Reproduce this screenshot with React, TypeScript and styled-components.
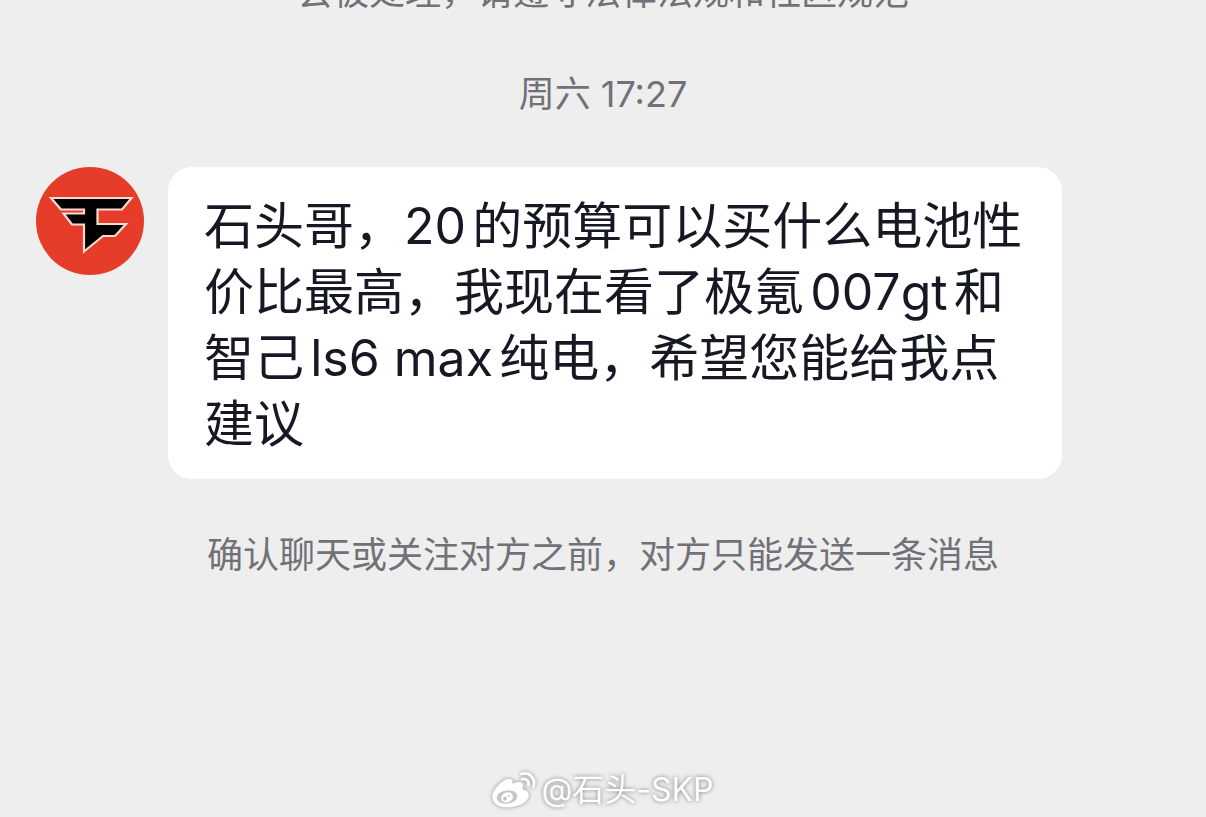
import React from 'react';
import styled, { createGlobalStyle } from 'styled-components';

const GlobalStyle = createGlobalStyle`
  * { box-sizing: border-box; }
  body {
    margin: 0;
    background: #eeeeee;
    font-family: Inter, "Noto Sans CJK SC", sans-serif;
    text-autospace: normal;
  }
`;

const Page = styled.main`
  min-height: 100vh;
  display: flex;
  flex-direction: column;
  background: #eeeeee;
`;

const SystemText = styled.p`
  margin: 0;
  text-align: center;
  font-size: 36px;
  line-height: 48px;
  color: #717178;
`;

const ClippedNotice = styled.header`
  height: 16px;
  overflow: hidden;
  display: flex;
  align-items: flex-end;
  justify-content: center;
`;

const Timestamp = styled(SystemText).attrs({ as: 'time' })`
  display: block;
  margin-top: 54px;
`;

const MessageRow = styled.article`
  display: flex;
  align-items: flex-start;
  gap: 24px;
  margin-top: 49px;
  padding: 0 144px 0 36px;
`;

const Avatar = styled.svg`
  flex: none;
  width: 108px;
  height: 108px;
`;

const Bubble = styled.p`
  flex: 1;
  margin: 0;
  padding: 26px 36px 22px;
  border-radius: 24px;
  background: #ffffff;
  color: #161823;
  font-size: 50px;
  line-height: 66px;
`;

const Hint = styled(SystemText)`
  margin-top: 52px;
`;

const Watermark = styled.footer`
  display: flex;
  align-items: center;
  justify-content: center;
  gap: 5px;
  margin-top: auto;
  padding-bottom: 6px;
  color: #ffffff;
  font-size: 32px;
  line-height: 42px;
  text-shadow: 0 0 4px rgba(0, 0, 0, 0.5);
`;

const WeiboLogo = styled.svg`
  width: 44px;
  height: 38px;
  overflow: visible;
  filter: drop-shadow(0 0 2px rgba(0, 0, 0, 0.4));
`;

export default function App() {
  return (
    <Page>
      <GlobalStyle />
      <ClippedNotice>
        <SystemText>会被处理，请遵守法律法规和社区规范</SystemText>
      </ClippedNotice>
      <Timestamp>周六 17:27</Timestamp>
      <MessageRow>
        <Avatar viewBox="0 0 108 108" role="img" aria-label="头像">
          <circle cx="54" cy="54" r="54" fill="#e63d2a" />
          <path
            d="M15 31H95.5L86 42.5H61.5V57H90L79 69H67L48 84.5V57.5H36L27.5 46.5H48V42.5H25Z"
            fill="#000000"
            stroke="#f8dcd4"
            strokeWidth="2.2"
          />
        </Avatar>
        <Bubble>
          石头哥，20的预算可以买什么电池性价比最高，我现在看了极氪007gt和智己ls6 max纯电，希望您能给我点建议
        </Bubble>
      </MessageRow>
      <Hint>确认聊天或关注对方之前，对方只能发送一条消息</Hint>
      <Watermark>
        <WeiboLogo viewBox="17 19 132 112" aria-hidden="true">
          <path
            d="M18 95C18 75 48 42 68 41C78 41 80 48 78 56C92 50 107 49 110 57C112 63 108 68 108 72C123 76 131 85 126 98C118 118 88 127 62 127C36 127 18 115 18 95Z"
            fill="#ffffff"
          />
          <ellipse cx="62" cy="96" rx="31" ry="20" transform="rotate(-8 62 96)" fill="#c6c6c6" />
          <ellipse cx="62" cy="97" rx="18" ry="15" transform="rotate(-20 62 97)" fill="#ffffff" />
          <circle cx="56" cy="101" r="5.5" fill="#c0c0c0" />
          <circle cx="67" cy="94" r="3" fill="#c0c0c0" />
          <g fill="none" stroke="#ffffff" strokeWidth="8" strokeLinecap="round">
            <path d="M105 27C128 20 150 40 141 65" />
            <path d="M107 43C119 39 130 49 126 61" />
          </g>
        </WeiboLogo>
        <span>@石头-SKP</span>
      </Watermark>
    </Page>
  );
}
